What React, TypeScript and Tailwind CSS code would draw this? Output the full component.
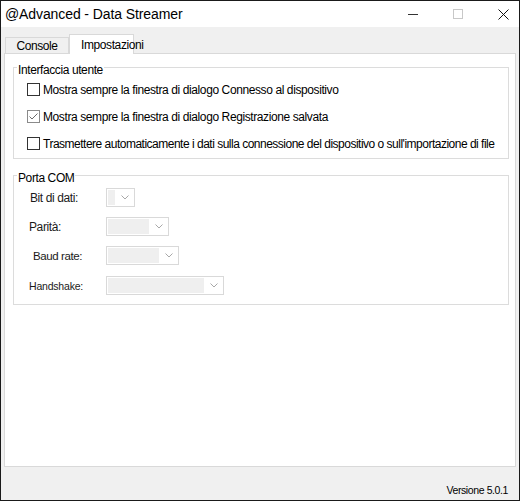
import React from "react";

const font = { fontFamily: "'Liberation Sans', Arial, sans-serif" };

function CheckRow({ label, checked, tight }: { label: string; checked?: boolean; tight?: boolean }) {
  return (
    <div className="flex h-[19px] items-center">
      <div
        className={
          checked
            ? "flex h-[13px] w-[13px] items-center justify-center border border-[#8a8a8a] bg-white"
            : "h-[13px] w-[13px] border border-[#333333] bg-white"
        }
      >
        {checked && (
          <svg width="11" height="11" viewBox="0 0 11 11">
            <polyline points="1.5,5.5 4,8 9.5,2.5" fill="none" stroke="#6b6b6b" strokeWidth="1" />
          </svg>
        )}
      </div>
      <span
        className={
          tight
            ? "ml-[3px] whitespace-nowrap text-[12px] leading-[14px] tracking-[-0.5px] text-black"
            : "ml-[3px] whitespace-nowrap text-[12px] leading-[14px] tracking-[-0.4px] text-black"
        }
      >
        {label}
      </span>
    </div>
  );
}

function Combo({ w }: { w: string }) {
  return (
    <div className={`flex h-[19px] border border-[#d9d9d9] bg-white ${w}`}>
      <div className="m-[1px] flex-1 bg-[#efefef]" />
      <div className="flex w-[18px] items-center justify-center">
        <svg width="8" height="5" viewBox="0 0 8 5">
          <polyline points="0.5,0.5 4,4 7.5,0.5" fill="none" stroke="#a8a8a8" strokeWidth="1" />
        </svg>
      </div>
    </div>
  );
}

export default function App() {
  return (
    <div
      className="flex h-[501px] w-[520px] flex-col border border-[#1a1a1a] bg-[#f0f0f0] text-black"
      style={font}
    >
      {/* title bar */}
      <div className="flex h-[26px] items-center bg-white">
        <span className="pl-[4px] text-[14px] leading-[16px] tracking-[-0.1px] text-black">
          @Advanced - Data Streamer
        </span>
        <div className="ml-auto flex items-center gap-[35px] pr-[10px]">
          <svg width="10" height="10" viewBox="0 0 10 10">
            <line x1="0" y1="5.5" x2="10" y2="5.5" stroke="#333" strokeWidth="1" />
          </svg>
          <svg width="10" height="10" viewBox="0 0 10 10">
            <rect x="0.5" y="0.5" width="9" height="9" fill="none" stroke="#c8c8c8" strokeWidth="1" />
          </svg>
          <svg width="11" height="11" viewBox="0 0 11 11">
            <line x1="0.5" y1="0.5" x2="10.5" y2="10.5" stroke="#111" strokeWidth="1" />
            <line x1="10.5" y1="0.5" x2="0.5" y2="10.5" stroke="#111" strokeWidth="1" />
          </svg>
        </div>
      </div>

      {/* tabs */}
      <div className="ml-[4px] mt-[7px] flex items-end">
        <div className="flex h-[16px] w-[64px] items-center justify-center border border-b-0 border-[#d9d9d9] bg-[#f0f0f0] text-[12px] leading-[14px] tracking-[-0.4px]">
          Console
        </div>
        <div className="relative z-10 -mb-[1px] flex h-[20px] w-[65px] items-center overflow-visible border border-b-0 border-[#d9d9d9] bg-white pl-[11px] text-[12px] leading-[14px] tracking-[-0.4px]">
          <span className="whitespace-nowrap">Impostazioni</span>
        </div>
      </div>

      {/* tab page */}
      <div className="ml-[3px] flex h-[414px] w-[512px] flex-col border border-[#d9d9d9] bg-white">
        <fieldset className="ml-[8px] mt-[3px] w-[496px] border border-[#dcdcdc] pb-[5px] pl-[13px]">
          <legend className="-ml-[10px] px-[1px] pt-[6px] text-[12px] leading-[14px] tracking-[-0.4px]">
            Interfaccia utente
          </legend>
          <div className="flex flex-col gap-[8px] pt-[3px]">
            <CheckRow label="Mostra sempre la finestra di dialogo Connesso al dispositivo" />
            <CheckRow label="Mostra sempre la finestra di dialogo Registrazione salvata" checked />
            <CheckRow
              tight
              label="Trasmettere automaticamente i dati sulla connessione del dispositivo o sull'importazione di file"
            />
          </div>
        </fieldset>

        <fieldset className="ml-[8px] mt-[6px] w-[496px] border border-[#dcdcdc] pb-[9px]">
          <legend className="ml-[3px] px-[1px] pt-[6px] text-[12px] leading-[14px] tracking-[-0.4px]">
            Porta COM
          </legend>
          <div className="flex flex-col pt-[3px]">
            <div className="flex h-[19px] items-center">
              <div className="w-[92px] pl-[16px] text-[12px] leading-[14px] tracking-[-0.4px] text-[#1a1a1a]">
                Bit di dati:
              </div>
              <Combo w="w-[29px]" />
            </div>
            <div className="mt-[10px] flex h-[19px] items-center">
              <div className="w-[92px] pl-[15px] text-[12px] leading-[14px] tracking-[-0.4px] text-[#1a1a1a]">
                Parità:
              </div>
              <Combo w="w-[63px]" />
            </div>
            <div className="mt-[10px] flex h-[19px] items-center">
              <div className="w-[92px] pl-[19px] text-[11.5px] leading-[14px] tracking-[-0.4px] text-[#1a1a1a]">
                Baud rate:
              </div>
              <Combo w="w-[73px]" />
            </div>
            <div className="mt-[11px] flex h-[19px] items-center">
              <div className="w-[92px] pl-[15px] text-[10.5px] leading-[14px] tracking-[-0.2px] text-[#1a1a1a]">
                Handshake:
              </div>
              <Combo w="w-[118px]" />
            </div>
          </div>
        </fieldset>
      </div>

      {/* status */}
      <div className="flex flex-1 justify-end pr-[11px] pt-[17px]">
        <span className="text-[10.5px] leading-[13px] tracking-[-0.4px]">Versione 5.0.1</span>
      </div>
    </div>
  );
}
